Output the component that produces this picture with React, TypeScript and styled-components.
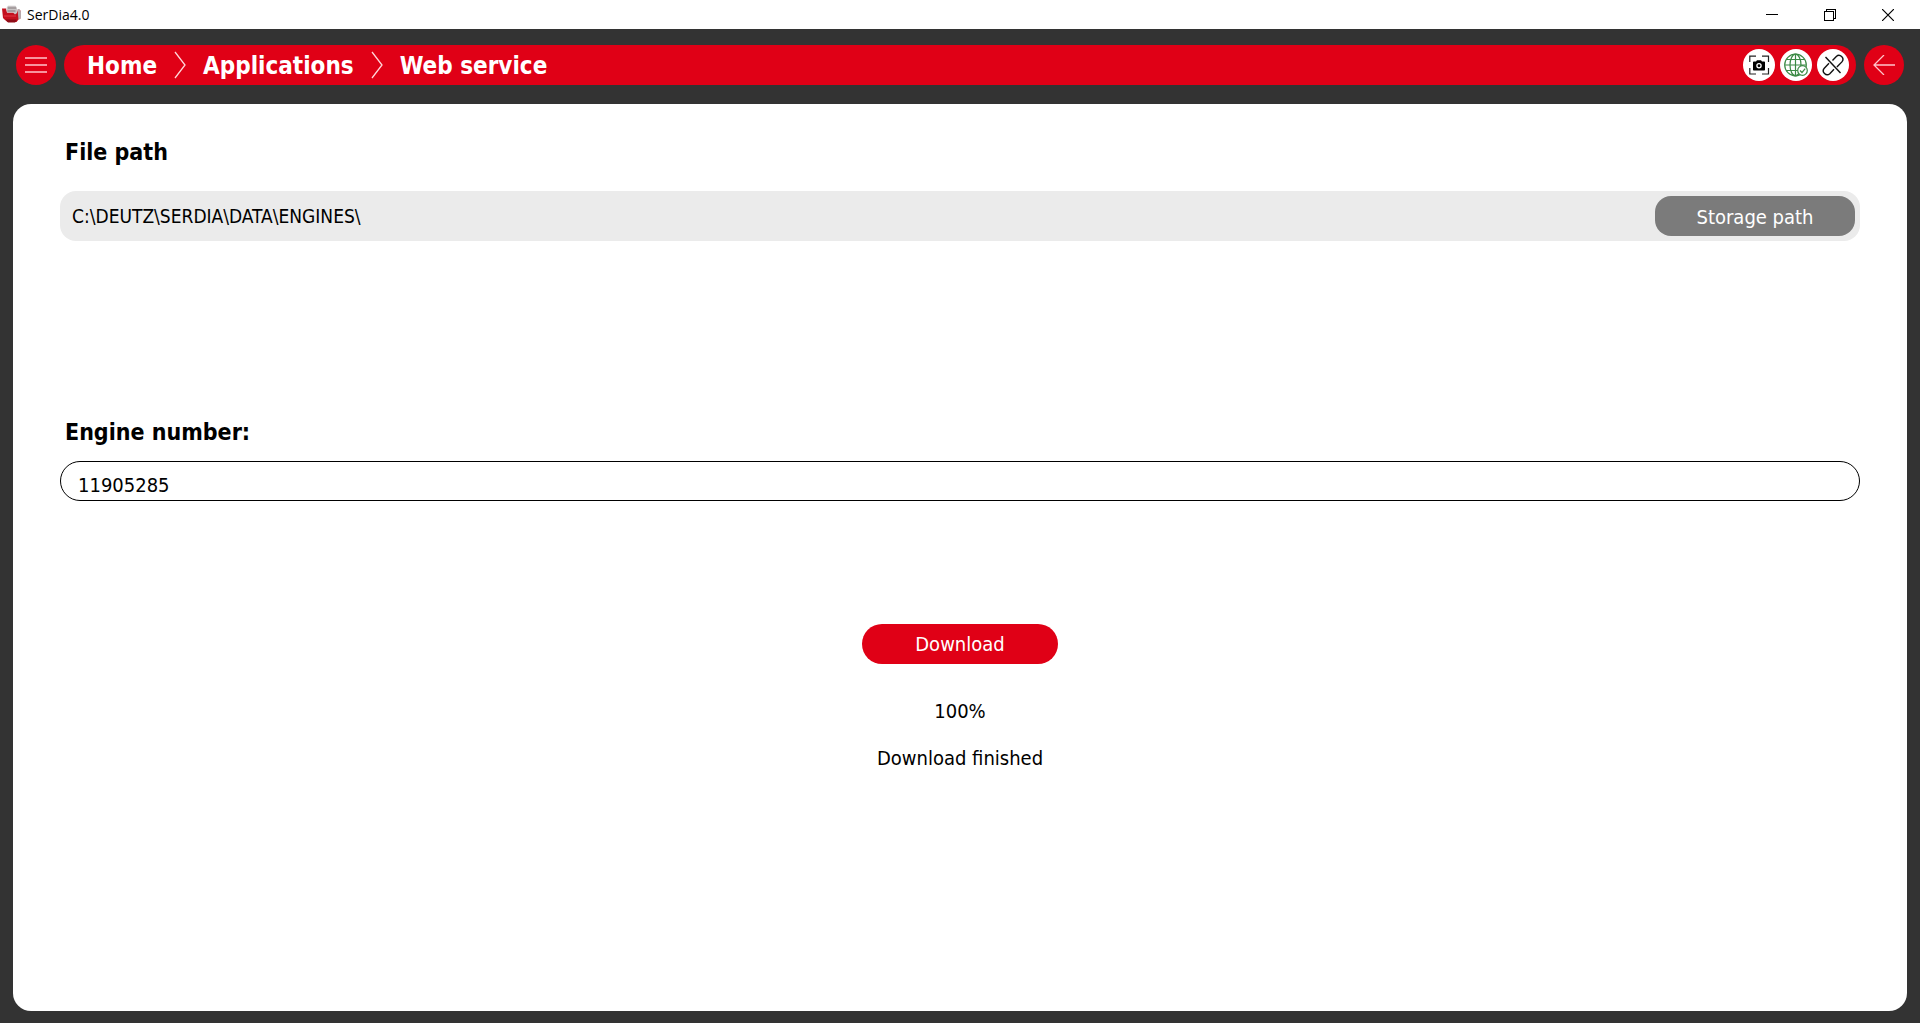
import React, { useState } from "react";
import styled, { createGlobalStyle } from "styled-components";

const red = "#e00016";

const GlobalStyle = createGlobalStyle`
  *, *::before, *::after { box-sizing: border-box; }
  html, body, #root { height: 100%; }
  body {
    margin: 0;
    background: #333;
    color: #000;
    font-family: "DejaVu Sans Condensed", "DejaVu Sans", sans-serif;
    font-size: 20px;
  }
  button, input { font: inherit; color: inherit; }
  button { border: 0; padding: 0; cursor: pointer; }
`;

const Window = styled.div`
  min-height: 100%;
  display: flex;
  flex-direction: column;
`;

const TitleBar = styled.header`
  height: 29px;
  display: flex;
  align-items: center;
  padding: 0 3px 0 1px;
  background: #fff;
  font-family: "Open Sans", "Noto Sans", sans-serif;
  font-size: 14px;
`;

const AppTitle = styled.span`
  flex: 1;
  margin-left: 5px;
`;

const WindowButton = styled.button`
  width: 58px;
  height: 29px;
  display: grid;
  place-items: center;
  background: transparent;
`;

const Toolbar = styled.div`
  display: flex;
  gap: 8px;
  padding: 16px 16px 19px;
`;

const RoundButton = styled.button`
  width: 40px;
  height: 40px;
  flex: none;
  display: grid;
  place-items: center;
  border-radius: 50%;
  background: ${red};
`;

const CrumbBar = styled.nav`
  flex: 1;
  height: 40px;
  display: flex;
  align-items: center;
  padding: 0 7px 0 23px;
  border-radius: 20px;
  background: ${red};
`;

const Crumbs = styled.ol`
  flex: 1;
  display: flex;
  align-items: center;
  gap: 17px;
  margin: 0;
  padding: 0;
  list-style: none;
`;

const Crumb = styled.li`
  display: flex;
  align-items: center;
  gap: 17px;
`;

const CrumbLink = styled.a`
  padding-top: 2px;
  color: #fff;
  font-size: 24px;
  font-weight: bold;
  line-height: 38px;
  text-decoration: none;
`;

const Tools = styled.div`
  display: flex;
  gap: 5px;
`;

const ToolButton = styled.button`
  width: 32px;
  height: 32px;
  border-radius: 50%;
  background: #fff;
`;

const Panel = styled.main`
  flex: 1;
  display: flex;
  flex-direction: column;
  margin: 0 13px 12px;
  padding: 33px 47px;
  border-radius: 18px;
  background: #fff;
`;

const Label = styled.label`
  padding-left: 5px;
  font-size: 23px;
  font-weight: bold;
  line-height: 30px;
`;

const PathRow = styled.div`
  display: flex;
  height: 50px;
  margin: 24px 0 176px;
  padding: 5px;
  border-radius: 16px;
  background: #ebebeb;
`;

const PathInput = styled.input`
  flex: 1;
  min-width: 0;
  padding: 0 7px;
  border: 0;
  background: transparent;
  font-size: 19px;
`;

const StorageButton = styled.button`
  width: 200px;
  padding-top: 2px;
  border-radius: 16px;
  background: #7b7b7b;
  color: #fff;
`;

const EngineInput = styled.input`
  height: 40px;
  margin-top: 14px;
  padding: 8px 17px 0;
  border: 1px solid #000;
  border-radius: 20px;
  background: #fff;
`;

const Progress = styled.section`
  display: flex;
  flex-direction: column;
  align-items: center;
  padding-top: 123px;
`;

const DownloadButton = styled.button`
  width: 196px;
  height: 40px;
  margin-bottom: 24px;
  border-radius: 20px;
  background: ${red};
  color: #fff;
`;

const Status = styled.output`
  line-height: 47px;
`;

const Logo = () => (
  <svg width="21" height="20" viewBox="0 0 21 20" aria-hidden="true">
    <path d="M1 3.500h4l1 4h10l1-3 2.500 1v8l-2 1-2 2.500H6.500L4 15l-2-2z" fill="#c4111f" />
    <path d="M4.500 14.500h11v1.500l-1.500 1.500H7z" fill="#8e0c17" />
    <path d="M5.500 3 7 .8h7.500L16 3v5l-2 1.500-2-2H6z" fill="#c9c4c5" />
    <path d="M7 3h8M6.500 6h8" stroke="#84787b" />
    <path d="M16.500 4h2l1.500 3v6l-2.500 2z" fill="#b8a9ab" />
    <path d="M3 11h12" stroke="#e33b47" />
  </svg>
);

const Chevron = () => (
  <svg width="12" height="28" viewBox="0 0 12 28" fill="none" stroke="#ffd5d9" strokeWidth="1.3" aria-hidden="true">
    <path d="M1 1 11 14 1 27" />
  </svg>
);

const CameraIcon = () => (
  <svg width="32" height="32" viewBox="0 0 32 32" fill="none" aria-hidden="true">
    <path d="M6.8 13V7.2H13M19 7.2h6.5V13M25.5 19v6H19M13 25H6.8v-6" stroke="#222" strokeWidth="1.2" />
    <path d="M10.800 12.500H13l1-1.300h4l1 1.300h2.200a.8.8 0 0 1 .8.8v7.400a.8.8 0 0 1-.8.8H10.800a.8.8 0 0 1-.8-.8v-7.400a.8.8 0 0 1 .8-.8z" fill="#000" />
    <circle cx="16" cy="16.700" r="2.100" stroke="#fff" strokeWidth="1.300" />
  </svg>
);

const GlobeIcon = () => (
  <svg width="32" height="32" viewBox="0 0 32 32" fill="none" stroke="#3b8a45" strokeWidth="1.200" aria-hidden="true">
    <circle cx="15.500" cy="16" r="10.800" />
    <ellipse cx="15.500" cy="16" rx="5.500" ry="10.800" />
    <path d="M15.500 5v22M5 16h21M6.500 10.500h18M6.500 21.500h18" />
    <circle cx="22.500" cy="21.500" r="4.800" fill="#fff" />
    <path d="m20 21.500 2 2 3.200-3.800" />
  </svg>
);

const UnlinkIcon = () => (
  <svg width="32" height="32" viewBox="0 0 32 32" fill="none" stroke="#111" strokeWidth="1.400" aria-hidden="true">
    <path d="M8.500 8 23.500 24" />
    <path d="M15.500 11.500 19.300 7.500a3.900 3.900 0 0 1 5.600 5.400l-5 5.100" />
    <path d="M12 14.300 7.300 19.200a3.900 3.900 0 0 0 5.500 5.500l4.200-4.400" />
  </svg>
);

const crumbs = ["Home", "Applications", "Web service"];

export default function App() {
  const [path, setPath] = useState("C:\\DEUTZ\\SERDIA\\DATA\\ENGINES\\");
  const [engine, setEngine] = useState("11905285");

  return (
    <>
      <GlobalStyle />
      <Window>
        <TitleBar>
          <Logo />
          <AppTitle>SerDia4.0</AppTitle>
          <WindowButton aria-label="Minimize">
            <svg width="12" height="12" stroke="#000" shapeRendering="crispEdges"><path d="M0 5.500h12" /></svg>
          </WindowButton>
          <WindowButton aria-label="Restore">
            <svg width="12" height="12" fill="none" stroke="#000" shapeRendering="crispEdges">
              <path d="M.5 2.500h9v9h-9zM2.500 2.500v-2h9v9h-2" />
            </svg>
          </WindowButton>
          <WindowButton aria-label="Close">
            <svg width="12" height="12" stroke="#000" strokeWidth="1.200"><path d="m0 0 12 12M12 0 0 12" /></svg>
          </WindowButton>
        </TitleBar>

        <Toolbar>
          <RoundButton aria-label="Menu">
            <svg width="22" height="16" stroke="#ffc4ca" strokeWidth="1.300"><path d="M0 1h22M0 8h22M0 15h22" /></svg>
          </RoundButton>
          <CrumbBar aria-label="Breadcrumb">
            <Crumbs>
              {crumbs.map((name, i) => (
                <Crumb key={name}>
                  {i > 0 && <Chevron />}
                  <CrumbLink href="#">{name}</CrumbLink>
                </Crumb>
              ))}
            </Crumbs>
            <Tools>
              <ToolButton aria-label="Screenshot"><CameraIcon /></ToolButton>
              <ToolButton aria-label="Online"><GlobeIcon /></ToolButton>
              <ToolButton aria-label="Disconnected"><UnlinkIcon /></ToolButton>
            </Tools>
          </CrumbBar>
          <RoundButton aria-label="Back">
            <svg width="22" height="20" fill="none" stroke="#ffc4ca" strokeWidth="1.300"><path d="M22 10H1M11 0 1 10l10 10" /></svg>
          </RoundButton>
        </Toolbar>

        <Panel>
          <Label htmlFor="path">File path</Label>
          <PathRow>
            <PathInput id="path" value={path} onChange={(e) => setPath(e.target.value)} />
            <StorageButton>Storage path</StorageButton>
          </PathRow>
          <Label htmlFor="engine">Engine number:</Label>
          <EngineInput id="engine" value={engine} onChange={(e) => setEngine(e.target.value)} />
          <Progress>
            <DownloadButton>Download</DownloadButton>
            <Status>100%</Status>
            <Status>Download finished</Status>
          </Progress>
        </Panel>
      </Window>
    </>
  );
}
